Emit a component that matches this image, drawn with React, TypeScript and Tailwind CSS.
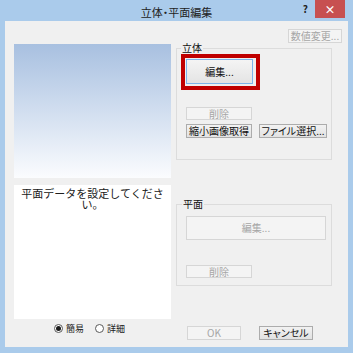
import type { ReactNode } from "react";

interface BtnProps {
  children: ReactNode;
  className?: string;
  disabled?: boolean;
  focused?: boolean;
}

function Btn({ children, className = "", disabled, focused }: BtnProps) {
  const look = disabled
    ? "border-[#d6d6d6] bg-[#f4f4f4] text-[#a6a6a6]"
    : focused
      ? "border-[#7eb4ea] bg-linear-to-b from-[#f4f4f4] to-[#e4e4e4] text-[#111]"
      : "border-[#acacac] bg-linear-to-b from-[#f2f2f2] to-[#e2e2e2] text-[#111]";
  return (
    <div
      className={`flex items-center justify-center border text-[10px] leading-none whitespace-nowrap ${look} ${className}`}
    >
      {children}
    </div>
  );
}

function Radio({ label, checked }: { label: string; checked?: boolean }) {
  return (
    <div className="flex items-center gap-[3px]">
      <div className="w-[9px] h-[9px] rounded-full border border-[#5a5a5a] bg-white flex items-center justify-center">
        {checked && <div className="w-[5px] h-[5px] rounded-full bg-[#1a1a1a]" />}
      </div>
      <span className="text-[9px] leading-none text-[#1b1b1b]">{label}</span>
    </div>
  );
}

export default function App() {
  return (
    <div className="w-[353px] h-[353px] bg-[#aacbeb] flex flex-col font-['Noto_Sans_CJK_JP',sans-serif] [font-feature-settings:'palt'] text-[#1b1b1b]">
      {/* title bar */}
      <div className="h-[21px] grid grid-cols-[1fr_auto_1fr]">
        <div />
        <div className="pt-[6px] text-[11px] leading-[12px] text-[#222]">立体・平面編集</div>
        <div className="flex justify-end items-start">
          <span className="mt-[4px] mr-[7px] text-[10px] font-bold leading-[10px] text-[#222]">?</span>
          <div className="w-[30px] h-[18px] mr-[8px] bg-[#c75050] flex items-center justify-center text-white text-[11px] font-bold leading-none">
            ×
          </div>
        </div>
      </div>

      {/* client */}
      <div className="mx-[5px] h-[326px] bg-[#f0f0f0] flex flex-col">
        <div className="h-[22px] flex justify-end items-start pt-[8px] pr-[6px]">
          <Btn disabled className="w-[54px] h-[14px] text-[9px]">
            数値変更...
          </Btn>
        </div>

        <div className="flex">
          {/* left column */}
          <div className="w-[166px] pl-[9px] pt-[1px] flex flex-col">
            <div className="h-[134px] bg-linear-to-b from-[#a8c0e0] to-[#fbfcfe]" />
            <div className="mt-[7px] h-[134px] bg-white px-[4px] pt-[3px] text-center text-[11px] leading-[11px] text-[#202020] [font-feature-settings:normal]">
              平面データを設定してください。
            </div>
            <div className="mt-[5px] pl-[40px] flex items-center gap-[11px]">
              <Radio label="簡易" checked />
              <Radio label="詳細" />
            </div>
          </div>

          {/* right column */}
          <div className="ml-[5px] w-[156px] flex flex-col">
            <fieldset className="border border-[#dcdcdc] pb-[21px]">
              <legend className="ml-[4px] px-[1px] text-[10px] leading-[10px] text-[#111]">立体</legend>
              <div className="ml-[4px] mt-[1px] w-[79px] h-[36px] border-[4px] border-[#c00000] pl-[1px] pt-[1px] flex items-start">
                <Btn focused className="w-[67px] h-[25px]">
                  編集...
                </Btn>
              </div>
              <Btn disabled className="ml-[9px] mt-[17px] w-[66px] h-[13px]">
                削除
              </Btn>
              <div className="ml-[9px] mt-[4px] flex gap-[7px]">
                <Btn className="w-[66px] h-[14px]">縮小画像取得</Btn>
                <Btn className="w-[68px] h-[14px] text-[9.5px]">ファイル選択...</Btn>
              </div>
            </fieldset>

            <fieldset className="mt-[39px] border border-[#dcdcdc] pb-[7px]">
              <legend className="ml-[5px] px-[1px] text-[10px] leading-[10px] text-[#111]">平面</legend>
              <Btn disabled className="ml-[9px] mt-[7px] w-[140px] h-[24px]">
                編集...
              </Btn>
              <Btn disabled className="ml-[9px] mt-[25px] w-[66px] h-[13px]">
                削除
              </Btn>
            </fieldset>

            <div className="mt-[40px] flex">
              <Btn disabled className="ml-[11px] w-[54px] h-[14px] text-[9px]">
                OK
              </Btn>
              <Btn className="ml-[18px] w-[54px] h-[14px] text-[8.5px]">キャンセル</Btn>
            </div>
          </div>
        </div>
      </div>
    </div>
  );
}
